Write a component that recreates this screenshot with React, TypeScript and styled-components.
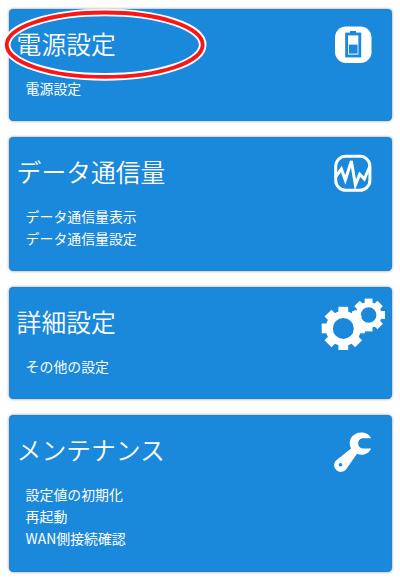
import React from "react";
import styled, { createGlobalStyle } from "styled-components";

const GlobalStyle = createGlobalStyle`
  * { box-sizing: border-box; }
  body {
    margin: 0;
    background: #fff;
    font-family: "Noto Sans CJK JP", sans-serif;
  }
`;

const Page = styled.main`
  position: relative;
  width: 400px;
  height: 581px;
  padding: 9px 8px 0 9px;
  display: flex;
  flex-direction: column;
  gap: 15.8px;
  overflow: hidden;
`;

const Card = styled.section`
  flex: none;
  display: flex;
  justify-content: space-between;
  padding: 17px 7px 22.3px 7.6px;
  border-radius: 4.5px;
  background: #1a88db;
  color: #fff;
  box-shadow: 0 0 3px rgba(80, 50, 30, 0.55), inset 0 0 1px #0878d4;
`;

const Title = styled.h2`
  margin: 0 0 15.7px;
  font-size: 24.8px;
  line-height: 35px;
  font-weight: 350;
`;

const Links = styled.ul`
  list-style: none;
  margin: 0;
  padding: 0 0 0 9px;
  font-size: 13.9px;
  line-height: 22.2px;
`;

const Icon = styled.svg`
  flex: none;
  width: 64px;
  height: 54px;
  margin-top: -8px;
`;

const Highlight = styled.svg`
  position: absolute;
  left: 0;
  top: 5px;
  width: 210px;
  height: 80px;
  pointer-events: none;
`;

const BatteryIcon = () => (
  <Icon viewBox="0 0 64 54">
    <rect x="14" y="8.5" width="36.5" height="36.5" rx="11" fill="#fff" />
    <rect x="29" y="13" width="6" height="3" fill="#1a88db" />
    <rect x="25.6" y="16" width="13.2" height="22" fill="#fff" stroke="#1a88db" strokeWidth="2.8" />
    <rect x="27.8" y="26.6" width="8.8" height="9" fill="#1a88db" />
  </Icon>
);

const WaveIcon = () => (
  <Icon viewBox="0 0 64 54">
    <rect x="14.7" y="10.3" width="34.2" height="34" rx="10" fill="none" stroke="#fff" strokeWidth="3" />
    <path
      d="M14.5 31 L20.4 23 L24.3 34 L30.4 15 L34.4 39 L38.7 28.3 L43.3 33 L49 20"
      fill="none"
      stroke="#fff"
      strokeWidth="3"
      strokeLinejoin="miter"
    />
  </Icon>
);

type GearProps = { x: number; y: number; body: number; hole: number; outer: number; tooth: number };

const Gear = ({ x, y, body, hole, outer, tooth }: GearProps) => (
  <g transform={`translate(${x} ${y})`} fill="#fff">
    {[0, 45, 90, 135, 180, 225, 270, 315].map((angle) => (
      <rect key={angle} x={-tooth / 2} y={-outer} width={tooth} height={outer - hole - 1} transform={`rotate(${angle})`} />
    ))}
    <circle r={(body + hole) / 2} fill="none" stroke="#fff" strokeWidth={body - hole} />
  </g>
);

const GearsIcon = () => (
  <Icon viewBox="0 0 64 54">
    <Gear x={22.3} y={32.4} body={17.5} hole={10.5} outer={21.6} tooth={9.8} />
    <Gear x={47.6} y={19} body={13} hole={7.8} outer={16.4} tooth={7.8} />
  </Icon>
);

const WrenchIcon = () => (
  <Icon viewBox="0 0 64 54">
    <path
      fill="#fff"
      fillRule="evenodd"
      d="M50.2 14.2 C47.8 10 44 8.5 40 8.6 C33 8.8 28.2 14 28.8 20.5 C29 22 29.3 23.2 30 24.5 L14.7 36.8 A6.7 6.7 0 1 0 25 45.5 L36 29.8 C42 32.5 48 29.5 50.2 24.5 L41.3 24.5 C38.5 23.8 37 21.8 37.1 19.2 C37.2 16.7 38.8 14.6 41.5 14.2 Z M19.5 39 A1.8 1.8 0 1 0 19.5 42.6 A1.8 1.8 0 1 0 19.5 39 Z"
    />
  </Icon>
);

const sections = [
  { title: "電源設定", items: ["電源設定"], icon: <BatteryIcon /> },
  { title: "データ通信量", items: ["データ通信量表示", "データ通信量設定"], icon: <WaveIcon /> },
  { title: "詳細設定", items: ["その他の設定"], icon: <GearsIcon /> },
  { title: "メンテナンス", items: ["設定値の初期化", "再起動", "WAN側接続確認"], icon: <WrenchIcon /> },
];

export default function App() {
  return (
    <>
      <GlobalStyle />
      <Page>
        {sections.map(({ title, items, icon }) => (
          <Card key={title}>
            <div>
              <Title>{title}</Title>
              <Links>
                {items.map((item) => (
                  <li key={item}>{item}</li>
                ))}
              </Links>
            </div>
            {icon}
          </Card>
        ))}
        <Highlight viewBox="0 0 210 80">
          <ellipse cx="104.7" cy="39.7" rx="98" ry="32.2" fill="none" stroke="#fff" strokeWidth="7.6" />
          <ellipse cx="104.7" cy="39.7" rx="98" ry="32.2" fill="none" stroke="#fa1616" strokeWidth="3.8" />
        </Highlight>
      </Page>
    </>
  );
}
